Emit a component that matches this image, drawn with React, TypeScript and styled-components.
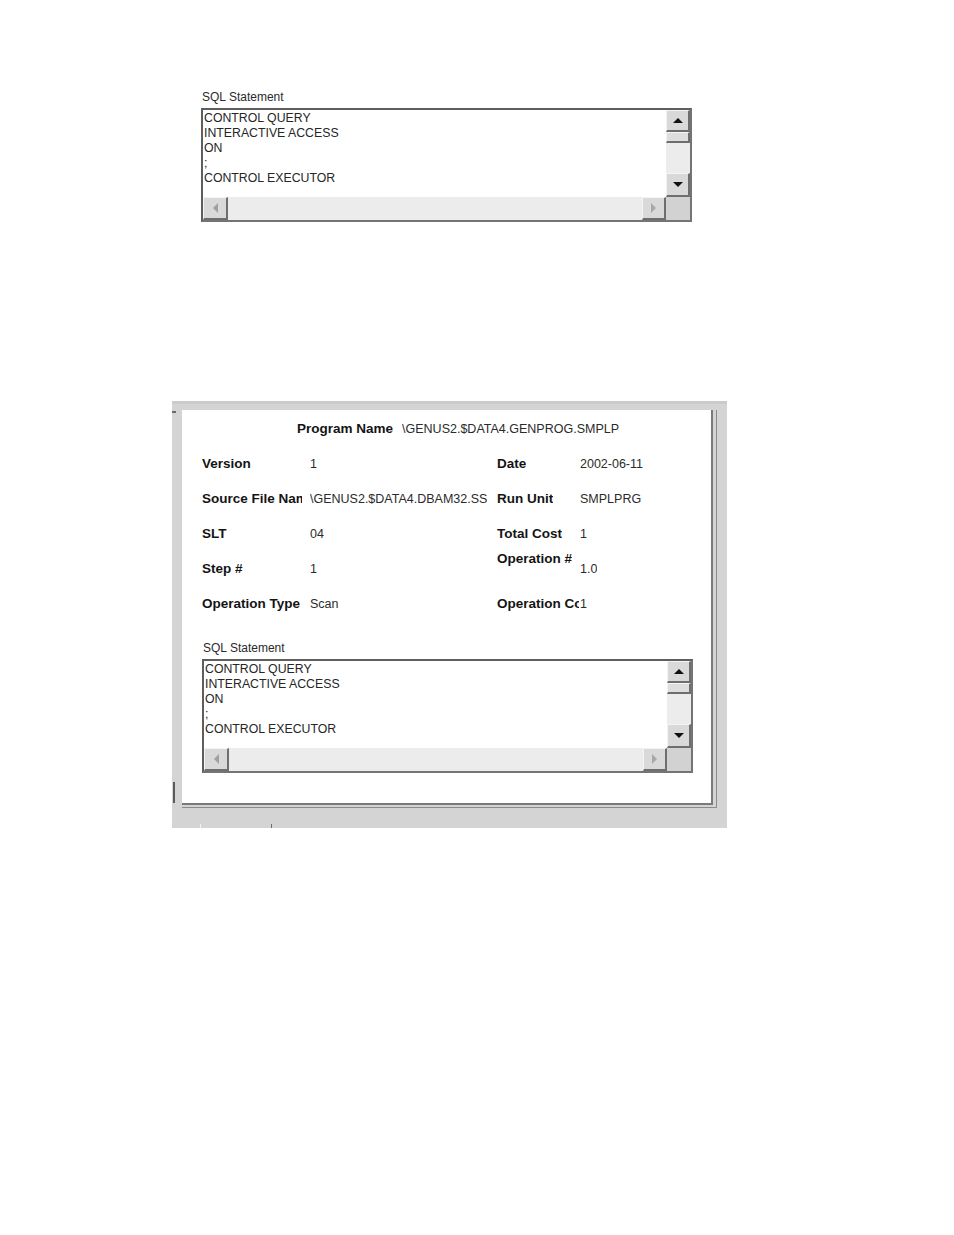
import styled, { createGlobalStyle } from 'styled-components';

const GlobalStyle = createGlobalStyle`
  body {
    margin: 0;
    background: #ffffff;
    font-family: "Liberation Sans", Arial, sans-serif;
  }
`;

const Page = styled.div`
  display: flex;
  flex-direction: column;
  align-items: flex-start;
  width: 954px;
  min-height: 1235px;
  padding-top: 90px;
  box-sizing: border-box;
`;

const TopBlock = styled.div`
  margin-left: 201px;
`;

const SqlLabel = styled.div<{ $indent?: number }>`
  font-size: 12px;
  line-height: 14px;
  color: #2a2a2a;
  margin-left: ${(p) => p.$indent ?? 1}px;
  margin-bottom: 4px;
`;

const SqlBox = styled.div`
  width: 491px;
  height: 114px;
  box-sizing: border-box;
  border: 2px solid #747474;
  border-top-color: #5e5e5e;
  border-left-color: #5e5e5e;
  display: grid;
  grid-template-columns: 1fr 24px;
  grid-template-rows: 1fr 23px;
  background: #ffffff;
`;

const SqlText = styled.div`
  padding: 1px 0 0 1px;
  font-size: 12.3px;
  line-height: 15px;
  color: #262626;
  white-space: pre;
  overflow: hidden;
`;

const VScroll = styled.div`
  display: flex;
  flex-direction: column;
  background: #ececec;
`;

const HScroll = styled.div`
  display: flex;
  background: #ececec;
`;

const ScrollButton = styled.div<{ $w?: number; $h?: number }>`
  width: ${(p) => (p.$w ? `${p.$w}px` : '100%')};
  height: ${(p) => (p.$h ? `${p.$h}px` : '100%')};
  flex: none;
  box-sizing: border-box;
  background: #d9d9d9;
  border-top: 1px solid #f4f4f4;
  border-left: 1px solid #f4f4f4;
  border-right: 2px solid #6e6e6e;
  border-bottom: 2px solid #6e6e6e;
  display: flex;
  align-items: center;
  justify-content: center;
`;

const Thumb = styled.div`
  height: 11px;
  flex: none;
  box-sizing: border-box;
  background: #dedede;
  border-top: 1px solid #f4f4f4;
  border-left: 1px solid #f4f4f4;
  border-right: 2px solid #6e6e6e;
  border-bottom: 2px solid #6e6e6e;
`;

const Track = styled.div`
  flex: 1;
`;

const Corner = styled.div`
  background: #d2d2d2;
`;

const Arrow = styled.svg`
  display: block;
`;

const ArrowUp = () => (
  <Arrow width="10" height="5" viewBox="0 0 10 5">
    <path d="M0 5 L5 0 L10 5 Z" fill="#111" />
  </Arrow>
);

const ArrowDown = () => (
  <Arrow width="10" height="5" viewBox="0 0 10 5">
    <path d="M0 0 L5 5 L10 0 Z" fill="#111" />
  </Arrow>
);

const ArrowLeft = () => (
  <Arrow width="5" height="10" viewBox="0 0 5 10">
    <path d="M5 0 L0 5 L5 10 Z" fill="#a0a0a0" />
  </Arrow>
);

const ArrowRight = () => (
  <Arrow width="5" height="10" viewBox="0 0 5 10">
    <path d="M0 0 L5 5 L0 10 Z" fill="#a8a8a8" />
  </Arrow>
);

const sqlLines = 'CONTROL QUERY\nINTERACTIVE ACCESS\nON\n;\nCONTROL EXECUTOR';

const SqlStatement = ({ indent }: { indent?: number }) => (
  <div>
    <SqlLabel $indent={indent}>SQL Statement</SqlLabel>
    <SqlBox>
      <SqlText>{sqlLines}</SqlText>
      <VScroll>
        <ScrollButton $h={22}>
          <ArrowUp />
        </ScrollButton>
        <Thumb />
        <Track />
        <ScrollButton $h={24}>
          <ArrowDown />
        </ScrollButton>
      </VScroll>
      <HScroll>
        <ScrollButton $w={25}>
          <ArrowLeft />
        </ScrollButton>
        <Track />
        <ScrollButton $w={24}>
          <ArrowRight />
        </ScrollButton>
      </HScroll>
      <Corner />
    </SqlBox>
  </div>
);

const Window = styled.div`
  margin-left: 172px;
  margin-top: 179px;
  width: 555px;
  height: 427px;
  box-sizing: border-box;
  background: #d4d4d4;
  border-top: 3px solid #cbcbcb;
  padding-top: 6px;
  display: flex;
  flex-direction: column;
`;

const MainRow = styled.div`
  display: flex;
`;

const LeftStrip = styled.div`
  width: 10px;
  display: flex;
  flex-direction: column;
  justify-content: space-between;
`;

const Tick = styled.div`
  width: 4px;
  height: 2px;
  margin-top: 1px;
  background: #6a6a6a;
`;

const ButtonEdge = styled.div`
  width: 2px;
  height: 21px;
  margin-left: 1px;
  margin-bottom: 5px;
  background: #5a5a5a;
`;

const FrameOuter = styled.div`
  border-right: 1px solid #8c8c8c;
  border-bottom: 1px solid #8c8c8c;
  padding-right: 3px;
  padding-bottom: 2px;
`;

const Panel = styled.div`
  width: 531px;
  height: 395px;
  box-sizing: border-box;
  background: #ffffff;
  border-right: 2px solid #7a7a7a;
  border-bottom: 2px solid #7a7a7a;
  padding: 11px 0 0 20px;
`;

const TitleRow = styled.div`
  display: flex;
  align-items: center;
  height: 15px;
  margin-left: 95px;
  gap: 9px;
`;

const BoldLabel = styled.div<{ $max: number }>`
  font-size: 13.5px;
  font-weight: bold;
  color: #141414;
  max-width: ${(p) => p.$max}px;
  overflow: hidden;
  white-space: nowrap;
`;

const Value = styled.div`
  font-size: 12.5px;
  color: #2b2b2b;
  white-space: nowrap;
  overflow: hidden;
`;

const FieldGrid = styled.div`
  display: grid;
  grid-template-columns: 108px 187px 83px 1fr;
  grid-auto-rows: 35px;
  margin-top: 10px;
`;

const Cell = styled.div<{ $raised?: boolean }>`
  display: flex;
  align-items: center;
  padding-bottom: ${(p) => (p.$raised ? 20 : 0)}px;
  overflow: hidden;
`;

type Field = { label: string; value: string; raised?: boolean };

const rows: [Field, Field][] = [
  [
    { label: 'Version', value: '1' },
    { label: 'Date', value: '2002-06-11' },
  ],
  [
    { label: 'Source File Name', value: '\\GENUS2.$DATA4.DBAM32.SS' },
    { label: 'Run Unit', value: 'SMPLPRG' },
  ],
  [
    { label: 'SLT', value: '04' },
    { label: 'Total Cost', value: '1' },
  ],
  [
    { label: 'Step #', value: '1' },
    { label: 'Operation #', value: '1.0', raised: true },
  ],
  [
    { label: 'Operation Type', value: 'Scan' },
    { label: 'Operation Cost', value: '1' },
  ],
];

const SqlArea = styled.div`
  margin-top: 20px;
`;

const BottomStrip = styled.div`
  flex: 1;
  display: flex;
  align-items: flex-end;
  padding-left: 28px;
`;

const TabEdge = styled.div`
  width: 72px;
  height: 4px;
  box-sizing: border-box;
  border-left: 1px solid #f2f2f2;
  border-right: 1px solid #6e6e6e;
`;

export default function App() {
  return (
    <>
      <GlobalStyle />
      <Page>
        <TopBlock>
          <SqlStatement />
        </TopBlock>

        <Window>
          <MainRow>
            <LeftStrip>
              <Tick />
              <ButtonEdge />
            </LeftStrip>
            <FrameOuter>
              <Panel>
                <TitleRow>
                  <BoldLabel $max={200}>Program Name</BoldLabel>
                  <Value>\GENUS2.$DATA4.GENPROG.SMPLP</Value>
                </TitleRow>
                <FieldGrid>
                  {rows.map(([left, right]) => (
                    <>
                      <Cell key={left.label}>
                        <BoldLabel $max={100}>{left.label}</BoldLabel>
                      </Cell>
                      <Cell key={left.label + '-v'}>
                        <Value>{left.value}</Value>
                      </Cell>
                      <Cell key={right.label} $raised={right.raised}>
                        <BoldLabel $max={82}>{right.label}</BoldLabel>
                      </Cell>
                      <Cell key={right.label + '-v'}>
                        <Value>{right.value}</Value>
                      </Cell>
                    </>
                  ))}
                </FieldGrid>
                <SqlArea>
                  <SqlStatement />
                </SqlArea>
              </Panel>
            </FrameOuter>
          </MainRow>
          <BottomStrip>
            <TabEdge />
          </BottomStrip>
        </Window>
      </Page>
    </>
  );
}
